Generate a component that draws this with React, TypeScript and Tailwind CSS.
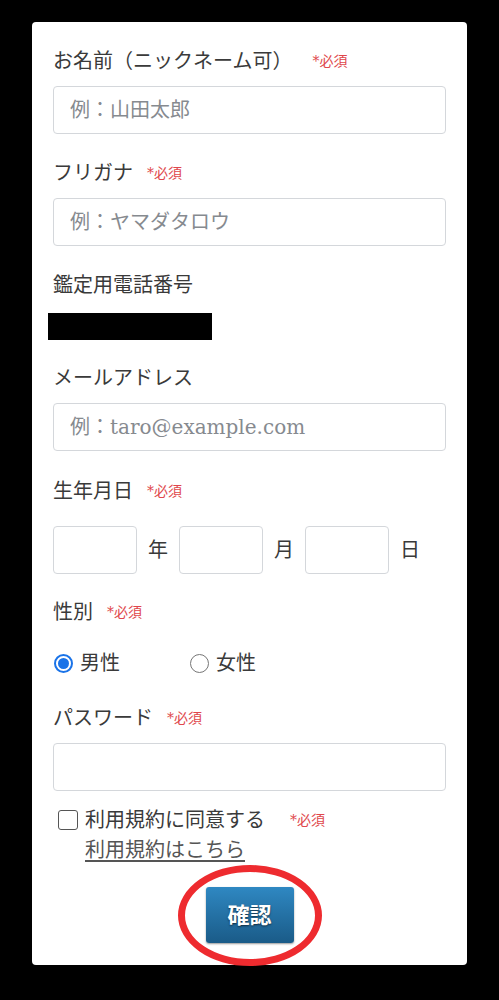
import React from 'react';

const font = { fontFamily: '"DejaVu Serif", "Noto Sans CJK JP", serif' };

function Req({ gap = 'ml-[14px]' }: { gap?: string }) {
  return <span className={`${gap} text-[14px] text-[#e0474c]`}>*必須</span>;
}

function Label({ children, req, gap }: { children: React.ReactNode; req?: boolean; gap?: string }) {
  return (
    <div className="flex h-[26px] items-center text-[20px] text-[#3a3a3a]">
      <span>{children}</span>
      {req && <Req gap={gap} />}
    </div>
  );
}

function TextInput({ placeholder }: { placeholder?: string }) {
  return (
    <input
      placeholder={placeholder}
      className="mt-[12px] block h-[48px] w-full rounded-[4px] border border-[#d4d7db] bg-white px-[16px] text-[20px] text-[#333] outline-none placeholder:text-[#868a8f]"
      style={font}
    />
  );
}

export default function App() {
  return (
    <div className="min-h-[1000px] bg-black pt-[22px]" style={font}>
      <div className="mx-[32px] h-[943px] rounded-[4px] bg-white px-[21px] pt-[26px]">
        <Label req gap="ml-[20px]">お名前（ニックネーム可）</Label>
        <TextInput placeholder="例：山田太郎" />

        <div className="mt-[26px]">
          <Label req>フリガナ</Label>
          <TextInput placeholder="例：ヤマダタロウ" />
        </div>

        <div className="mt-[26px]">
          <Label>鑑定用電話番号</Label>
          <div className="ml-[-5px] mt-[15px] h-[27px] w-[164px] bg-black" />
        </div>

        <div className="mt-[25px]">
          <Label>メールアドレス</Label>
          <TextInput placeholder="例：taro@example.com" />
        </div>

        <div className="mt-[27px]">
          <Label req>生年月日</Label>
          <div className="mt-[22px] flex items-center text-[20px] text-[#3a3a3a]">
            <input className="h-[48px] w-[84px] rounded-[4px] border border-[#d4d7db] outline-none" />
            <span className="mx-[11px] w-[20px] text-center">年</span>
            <input className="h-[48px] w-[84px] rounded-[4px] border border-[#d4d7db] outline-none" />
            <span className="mx-[11px] w-[20px] text-center">月</span>
            <input className="h-[48px] w-[84px] rounded-[4px] border border-[#d4d7db] outline-none" />
            <span className="mx-[11px] w-[20px] text-center">日</span>
          </div>
        </div>

        <div className="mt-[25px]">
          <Label req>性別</Label>
          <div className="mt-[25px] flex h-[26px] items-center text-[20px] text-[#3a3a3a]">
            <span className="ml-[1px] flex h-[19px] w-[19px] items-center justify-center rounded-full border-[2px] border-[#1a73e8] bg-white">
              <span className="h-[11px] w-[11px] rounded-full bg-[#1a73e8]" />
            </span>
            <span className="ml-[7px]">男性</span>
            <span className="ml-[70px] h-[19px] w-[19px] rounded-full border border-[#767676] bg-white" />
            <span className="ml-[7px]">女性</span>
          </div>
        </div>

        <div className="mt-[29px]">
          <Label req>パスワード</Label>
          <TextInput />
        </div>

        <div className="mt-[16px] flex h-[26px] items-center pl-[5px] text-[20px] text-[#3a3a3a]">
          <span className="h-[20px] w-[20px] rounded-[3px] border-[1.5px] border-[#555] bg-white" />
          <span className="ml-[7px]">利用規約に同意する</span>
          <span className="ml-[25px] text-[14px] text-[#e0474c]">*必須</span>
        </div>
        <div className="mt-[4px] h-[26px] pl-[32px] text-[20px] leading-[26px] text-[#555]">
          <a href="#" className="underline decoration-[1.5px] underline-offset-[3px]">利用規約はこちら</a>
        </div>

        <div className="mt-[24px] flex justify-center">
          <div className="relative">
            <button
              className="h-[56px] w-[88px] rounded-[3px] bg-gradient-to-b from-[#2f88c2] to-[#1a5b88] text-[22px] font-bold text-white shadow-[0_1px_2px_rgba(0,0,0,0.4)] [text-shadow:0_1px_2px_rgba(0,0,0,0.6)]"
              style={font}
            >
              確認
            </button>
            <div className="pointer-events-none absolute left-[-28px] right-[-28px] top-[-22px] bottom-[-23px] rounded-[50%] border-[7px] border-[#ee2b2f]" />
          </div>
        </div>
      </div>
    </div>
  );
}
